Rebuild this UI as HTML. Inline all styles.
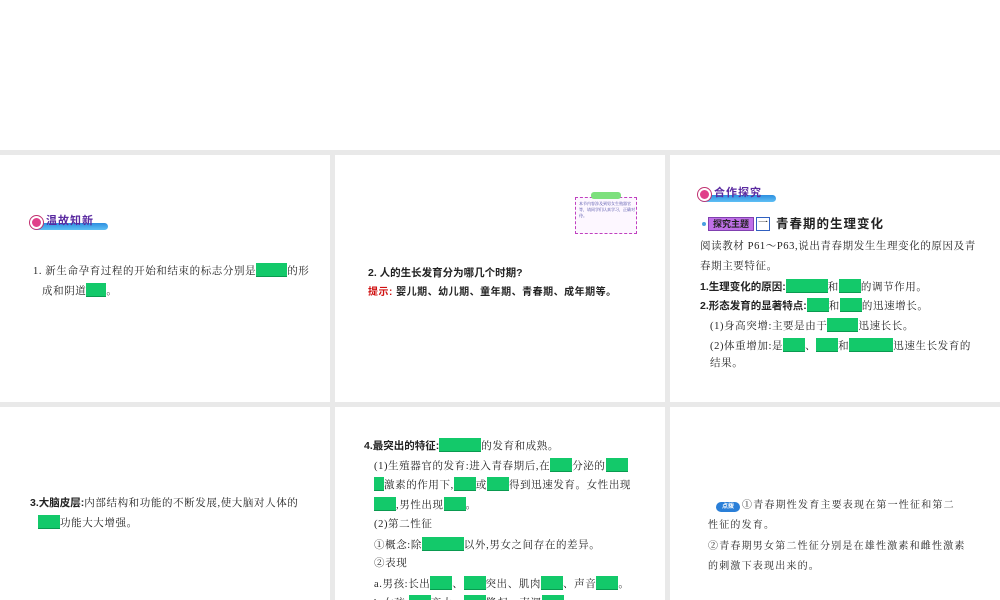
<!DOCTYPE html>
<html><head><meta charset="utf-8"><style>
*{margin:0;padding:0;box-sizing:border-box}
html,body{width:1000px;height:600px;overflow:hidden}
body{background:#fff;position:relative;font-family:"Liberation Serif","Noto Serif CJK SC",serif;color:#222}
.g{position:absolute;background:#e9e9e9}
.p{position:absolute;background:#fff;overflow:hidden}
.t{position:absolute;font-size:10.5px;white-space:nowrap;line-height:14px;letter-spacing:0.6px}
.b{display:inline-block;background:#13c96a;height:14px;vertical-align:-3px;border-bottom:1px solid #0a9a50}
.s{font-family:"Liberation Sans","Noto Sans CJK SC",sans-serif;font-weight:bold;letter-spacing:0}
.tag{position:absolute;height:18px}
.tag .bar{position:absolute;left:2px;top:10px;height:7px;background:linear-gradient(#2d8fe0,#5fc0f5);border-radius:4px}
.tag .c{position:absolute;left:0;top:3px;width:13px;height:13px;border-radius:50%;background:#e0408a;border:2px solid #fff;box-shadow:0 0 0 1px #c03070}
.tag .w{position:absolute;left:16px;top:-1px;font-size:11px;color:#5a2aa0;font-weight:bold;font-family:"Liberation Sans","Noto Sans CJK SC",sans-serif;letter-spacing:1px}
</style></head><body>
<div class="g" style="left:0;top:150px;width:1000px;height:450px"></div>
<div class="p" style="left:0;top:155px;width:330px;height:247px"></div>
<div class="p" style="left:335px;top:155px;width:330px;height:247px"></div>
<div class="p" style="left:670px;top:155px;width:330px;height:247px"></div>
<div class="p" style="left:0;top:407px;width:330px;height:193px"></div>
<div class="p" style="left:335px;top:407px;width:330px;height:193px"></div>
<div class="p" style="left:670px;top:407px;width:330px;height:193px"></div>

<!-- panel 1 -->
<div class="tag" style="left:30px;top:213px;width:78px"><div class="bar" style="width:76px"></div><div class="c"></div><div class="w">温故知新</div></div>
<div class="t" style="left:33px;top:263px">1. 新生命孕育过程的开始和结束的标志分别是<span class="b" style="width:31px"></span>的形</div>
<div class="t" style="left:42px;top:283px">成和阴道<span class="b" style="width:20px"></span>。</div>

<!-- panel 2 -->
<div style="position:absolute;left:575px;top:197px;width:62px;height:37px;border:1px dashed #c040c0;background:#fdf7ff"></div>
<div style="position:absolute;left:591px;top:192px;width:30px;height:7px;background:#7de07d;border-radius:3px"></div>
<div style="position:absolute;left:579px;top:201px;width:56px;font-size:4px;line-height:6px;color:#4040a0;white-space:normal">本节内容涉及到男女生殖器官等，请同学们认真学习，正确对待。</div>
<div class="t s" style="left:368px;top:266px;font-size:10.5px">2. 人的生长发育分为哪几个时期?</div>
<div class="t s" style="left:368px;top:286px;font-size:10px;letter-spacing:0.5px"><span style="color:#d01010">提示:</span> 婴儿期、幼儿期、童年期、青春期、成年期等。</div>

<!-- panel 3 -->
<div class="tag" style="left:698px;top:185px;width:78px"><div class="bar" style="width:76px"></div><div class="c"></div><div class="w">合作探究</div></div>
<div style="position:absolute;left:702px;top:222px;width:4px;height:4px;border-radius:50%;background:#4aa0e0"></div>
<div style="position:absolute;left:708px;top:217px;width:46px;height:14px;background:#c070e8;border:1px solid #8040b0;font-size:9px;font-weight:bold;color:#222;text-align:center;line-height:12px;font-family:'Liberation Sans','Noto Sans CJK SC',sans-serif">探究主题</div>
<div style="position:absolute;left:756px;top:217px;width:14px;height:14px;border:1px solid #3060c0;font-size:10px;line-height:11px;text-align:center;color:#222">一</div>
<div class="t s" style="left:776px;top:216px;font-size:12.5px;line-height:16px;letter-spacing:1px">青春期的生理变化</div>
<div class="t" style="left:700px;top:240px">阅读教材 P61～P63,说出青春期发生生理变化的原因及青</div>
<div class="t" style="left:700px;top:260px">春期主要特征。</div>
<div class="t" style="left:700px;top:279px"><b class="s">1.生理变化的原因:</b><span class="b" style="width:42px"></span>和<span class="b" style="width:22px"></span>的调节作用。</div>
<div class="t" style="left:700px;top:298px"><b class="s">2.形态发育的显著特点:</b><span class="b" style="width:22px"></span>和<span class="b" style="width:22px"></span>的迅速增长。</div>
<div class="t" style="left:710px;top:318px">(1)身高突增:主要是由于<span class="b" style="width:31px"></span>迅速长长。</div>
<div class="t" style="left:710px;top:338px">(2)体重增加:是<span class="b" style="width:22px"></span>、<span class="b" style="width:22px"></span>和<span class="b" style="width:44px"></span>迅速生长发育的</div>
<div class="t" style="left:710px;top:357px">结果。</div>

<!-- panel 4 -->
<div class="t" style="left:30px;top:496px"><b class="s">3.大脑皮层:</b>内部结构和功能的不断发展,使大脑对人体的</div>
<div class="t" style="left:38px;top:515px"><span class="b" style="width:22px"></span>功能大大增强。</div>

<!-- panel 5 -->
<div class="t" style="left:364px;top:438px"><b class="s">4.最突出的特征:</b><span class="b" style="width:42px"></span>的发育和成熟。</div>
<div class="t" style="left:374px;top:458px">(1)生殖器官的发育:进入青春期后,在<span class="b" style="width:22px"></span>分泌的<span class="b" style="width:22px"></span></div>
<div class="t" style="left:374px;top:477px"><span class="b" style="width:10px"></span>激素的作用下,<span class="b" style="width:22px"></span>或<span class="b" style="width:22px"></span>得到迅速发育。女性出现</div>
<div class="t" style="left:374px;top:497px"><span class="b" style="width:22px"></span>,男性出现<span class="b" style="width:22px"></span>。</div>
<div class="t" style="left:374px;top:518px">(2)第二性征</div>
<div class="t" style="left:374px;top:537px">①概念:除<span class="b" style="width:42px"></span>以外,男女之间存在的差异。</div>
<div class="t" style="left:374px;top:557px">②表现</div>
<div class="t" style="left:374px;top:576px">a.男孩:长出<span class="b" style="width:22px"></span>、<span class="b" style="width:22px"></span>突出、肌肉<span class="b" style="width:22px"></span>、声音<span class="b" style="width:22px"></span>。</div>
<div class="t" style="left:374px;top:595px">b.女孩:<span class="b" style="width:22px"></span>变大、<span class="b" style="width:22px"></span>隆起、声调<span class="b" style="width:22px"></span></div>

<!-- panel 6 -->
<div style="position:absolute;left:716px;top:502px;width:24px;height:10px;border-radius:5px;background:#2a7fd8;color:#fff;font-size:6px;line-height:10px;text-align:center;font-family:'Liberation Sans','Noto Sans CJK SC',sans-serif;font-weight:bold">点拨</div>
<div class="t" style="left:742px;top:499px;font-size:10px;letter-spacing:1.2px">①青春期性发育主要表现在第一性征和第二</div>
<div class="t" style="left:708px;top:519px;font-size:10px;letter-spacing:1.2px">性征的发育。</div>
<div class="t" style="left:708px;top:540px;font-size:10px;letter-spacing:1.2px">②青春期男女第二性征分别是在雄性激素和雌性激素</div>
<div class="t" style="left:708px;top:560px;font-size:10px;letter-spacing:1.2px">的刺激下表现出来的。</div>
</body></html>
